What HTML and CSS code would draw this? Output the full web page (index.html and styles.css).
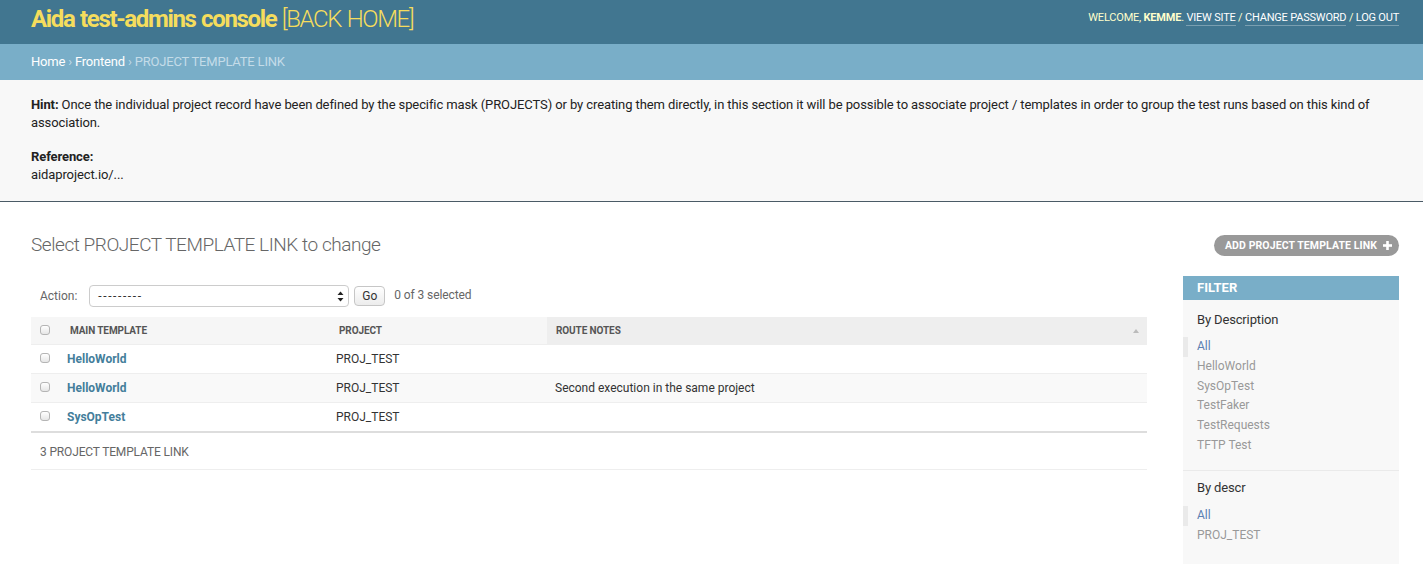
FILE: index.html
```html
<!DOCTYPE html>
<html lang="en">
<head>
<meta charset="utf-8">
<title>Select PROJECT TEMPLATE LINK to change</title>
<link rel="stylesheet" href="styles.css">
</head>
<body>
<header class="header">
  <h1 class="brand"><strong>Aida test-admins console</strong> <a href="#" class="back">[BACK HOME]</a></h1>
  <div class="user-tools">
    WELCOME, <strong>KEMME</strong>. <a href="#">VIEW SITE</a> / <a href="#">CHANGE PASSWORD</a> / <a href="#">LOG OUT</a>
  </div>
</header>
<nav class="breadcrumbs">
  <a href="#">Home</a> › <a href="#">Frontend</a> › PROJECT TEMPLATE LINK
</nav>
<section class="hint">
  <p><strong>Hint:</strong> Once the individual project record have been defined by the specific mask (PROJECTS) or by creating them directly, in this section it will be possible to associate project / templates in order to group the test runs based on this kind of association.</p>
  <p><strong>Reference:</strong><br>aidaproject.io/...</p>
</section>
<main class="content">
  <div class="title-row">
    <h2 class="title">Select PROJECT TEMPLATE LINK to change</h2>
    <a href="#" class="addlink">ADD PROJECT TEMPLATE LINK
      <svg class="plus" width="9" height="9" viewBox="0 0 9 9"><rect x="3.2" y="0" width="2.6" height="9" fill="#fff"/><rect x="0" y="3.2" width="9" height="2.6" fill="#fff"/></svg>
    </a>
  </div>
  <div class="changelist">
    <div class="results-col">
      <div class="actions">
        <span class="action-label">Action:</span>
        <div class="select">
          <span class="dashes">---------</span>
          <svg width="7" height="11" viewBox="0 0 7 11"><path d="M3.5 0.5 L6.5 4 L0.5 4 Z" fill="#222"/><path d="M3.5 10.5 L6.5 7 L0.5 7 Z" fill="#222"/></svg>
        </div>
        <button class="go" type="button">Go</button>
        <span class="counter">0 of 3 selected</span>
      </div>
      <table class="results">
        <colgroup>
          <col class="c-check"><col class="c-main"><col class="c-proj"><col class="c-notes">
        </colgroup>
        <thead>
          <tr>
            <th class="check"><span class="cb"></span></th>
            <th>MAIN TEMPLATE</th>
            <th>PROJECT</th>
            <th class="sorted">ROUTE NOTES<span class="sort-up"></span></th>
          </tr>
        </thead>
        <tbody>
          <tr class="row1">
            <td class="check"><span class="cb"></span></td>
            <td><a href="#" class="rlink">HelloWorld</a></td>
            <td>PROJ_TEST</td>
            <td></td>
          </tr>
          <tr class="row2">
            <td class="check"><span class="cb"></span></td>
            <td><a href="#" class="rlink">HelloWorld</a></td>
            <td>PROJ_TEST</td>
            <td>Second execution in the same project</td>
          </tr>
          <tr class="row1">
            <td class="check"><span class="cb"></span></td>
            <td><a href="#" class="rlink">SysOpTest</a></td>
            <td>PROJ_TEST</td>
            <td></td>
          </tr>
        </tbody>
      </table>
      <p class="paginator">3 PROJECT TEMPLATE LINK</p>
    </div>
    <aside class="filter">
      <h2 class="filter-title">FILTER</h2>
      <h3 class="filter-h">By Description</h3>
      <ul class="filter-list">
        <li class="selected"><a href="#">All</a></li>
        <li><a href="#">HelloWorld</a></li>
        <li><a href="#">SysOpTest</a></li>
        <li><a href="#">TestFaker</a></li>
        <li><a href="#">TestRequests</a></li>
        <li><a href="#">TFTP Test</a></li>
      </ul>
      <h3 class="filter-h second">By descr</h3>
      <ul class="filter-list last">
        <li class="selected"><a href="#">All</a></li>
        <li><a href="#">PROJ_TEST</a></li>
      </ul>
    </aside>
  </div>
</main>
</body>
</html>
```
FILE: styles.css
```css
* { box-sizing: border-box; }
html, body { margin: 0; padding: 0; }
body {
  font-family: Roboto, "Liberation Sans", Arial, sans-serif;
  font-size: 13px;
  color: #333;
  background: #fff;
}
a { text-decoration: none; }

.header {
  display: flex;
  justify-content: space-between;
  align-items: flex-start;
  height: 44px;
  padding: 0 24px 0 31px;
  background: #417690;
}
.brand {
  margin: 5px 0 0;
  font-size: 24px;
  line-height: 28px;
  font-weight: 300;
  letter-spacing: -1.35px;
  word-spacing: 1px;
  color: #f5dd5d;
}
.brand strong { font-weight: 700; }
.brand .back { color: #f5dd5d; }
.user-tools {
  margin-top: 11px;
  font-size: 11px;
  line-height: 13px;
  letter-spacing: -0.2px;
  color: #ffc;
}
.user-tools strong { font-weight: 700; }
.user-tools a {
  color: #fff;
  border-bottom: 1px solid rgba(255,255,255,0.3);
  padding-bottom: 1px;
}

.breadcrumbs {
  height: 36px;
  line-height: 36px;
  padding: 0 31px;
  background: #79aec8;
  color: #c4dce8;
  font-size: 13px;
  letter-spacing: -0.2px;
}
.breadcrumbs a { color: #fff; }

.hint {
  background: #f8f8f8;
  padding: 16px 24px 17px 31px;
  border-bottom: 1px solid #4a5a66;
  color: #222;
  line-height: 18px;
  letter-spacing: -0.1px;
}
.hint p { margin: 0; }
.hint p + p { margin-top: 16px; }
.hint strong { font-weight: 700; }

.content { padding: 31px 24px 0 31px; }
.title-row {
  display: flex;
  justify-content: space-between;
  align-items: center;
  height: 24px;
}
.title {
  margin: 0;
  font-size: 19px;
  line-height: 24px;
  font-weight: 300;
  letter-spacing: -0.45px;
  color: #666;
}
.addlink {
  display: flex;
  align-items: center;
  gap: 6px;
  height: 21px;
  padding: 0 7px 0 11px;
  border-radius: 11px;
  background: #999;
  color: #fff;
  font-size: 10.5px;
  font-weight: 700;
  letter-spacing: 0.1px;
}

.changelist {
  display: flex;
  gap: 36px;
  margin-top: 19px;
}
.results-col { flex: 1; }
.actions {
  display: flex;
  align-items: center;
  height: 24px;
  margin-top: 8px;
  padding-left: 9px;
  color: #666;
  font-size: 12px;
}
.action-label { margin-right: 12px; }
.select {
  display: flex;
  justify-content: space-between;
  align-items: center;
  width: 260px;
  height: 22px;
  padding: 0 4px 0 8px;
  border: 1px solid #ccc;
  border-radius: 4px;
  background: #fff;
  color: #333;
  font-size: 12px;
}
.dashes { letter-spacing: 1.6px; }
.go {
  margin-left: 5px;
  width: 31px;
  height: 20px;
  padding: 0;
  border: 1px solid #c6c6c6;
  border-radius: 4px;
  background: linear-gradient(#fff, #ececec);
  font-family: inherit;
  font-size: 12px;
  color: #333;
}
.counter { margin-left: 9px; margin-top: -2px; letter-spacing: -0.1px; }

.results {
  width: 100%;
  margin-top: 9px;
  border-collapse: collapse;
  table-layout: fixed;
  font-size: 12px;
}
.c-check { width: 28px; }
.c-main { width: 269px; }
.c-proj { width: 219px; }
.results th {
  height: 27px;
  padding: 0 10px 0 11px;
  text-align: left;
  background: #f6f6f6;
  border-bottom: 1px solid #eee;
  color: #555;
  font-size: 10px;
  font-weight: 700;
  letter-spacing: -0.1px;
  position: relative;
}
.results th.sorted { background: #eee; padding-left: 9px; }
.results th.check, .results td.check { padding: 0 0 0 9px; }
.sort-up {
  position: absolute;
  right: 8px;
  top: 12px;
  width: 0; height: 0;
  border-left: 3.5px solid transparent;
  border-right: 3.5px solid transparent;
  border-bottom: 4px solid #bbb;
}
.results td {
  height: 29px;
  padding: 0 8px;
  border-bottom: 1px solid #eee;
  color: #333;
}
.results tbody tr:last-child td { border-bottom: 1px solid #ddd; }
.row2 td { background: #f9f9f9; }
.cb {
  display: inline-block;
  vertical-align: middle;
  width: 10px;
  height: 10px;
  border: 1px solid #b5b5b5;
  border-radius: 3px;
  background: linear-gradient(#fff, #e6e6e6);
  margin-top: -3px;
}
.rlink { color: #447e9b; font-weight: 700; }

.paginator {
  margin: 0;
  height: 38px;
  line-height: 38px;
  padding: 0 9px;
  border-top: 1px solid #ddd;
  border-bottom: 1px solid #eee;
  color: #666;
  font-size: 12px;
  letter-spacing: -0.15px;
}

.filter {
  width: 216px;
  background: #f8f8f8;
  padding-bottom: 19px;
  align-self: flex-start;
}
.filter-title {
  margin: 0;
  height: 24px;
  line-height: 24px;
  padding: 0 14px;
  background: #79aec8;
  color: #fff;
  font-size: 13px;
  font-weight: 700;
}
.filter-h {
  margin: 12px 0 0;
  padding: 0 14px;
  font-size: 13px;
  line-height: 16px;
  font-weight: 400;
  letter-spacing: -0.15px;
  color: #333;
}
.filter-h.second { margin-top: 9px; }
.filter-list {
  list-style: none;
  margin: 9px 0 0;
  padding: 0 14px 14px;
  border-bottom: 1px solid #eaeaea;
  font-size: 12px;
}
.filter-list.last { border-bottom: none; padding-bottom: 0; margin-top: 10px; }
.filter-list li { line-height: 19.8px; }
.filter-list a { color: #999; }
.filter-list li.selected {
  margin-left: -14px;
  padding-left: 9px;
  border-left: 5px solid #eaeaea;
}
.filter-list li.selected a { color: #5b80b2; }
```
